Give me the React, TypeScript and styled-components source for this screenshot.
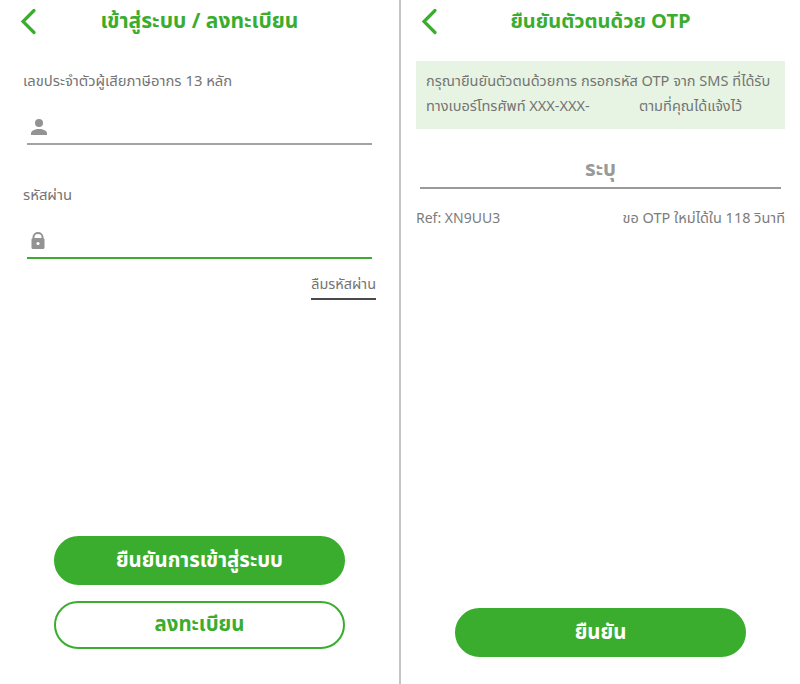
import styled, { createGlobalStyle } from 'styled-components';

const GREEN = '#3aad2e';

const GlobalStyle = createGlobalStyle`
  html, body {
    margin: 0;
    padding: 0;
    background: #fff;
    font-family: 'Noto Sans Thai', 'Noto Sans', 'DejaVu Sans', sans-serif;
  }
`;

/* Layout */
const Page = styled.div`
  display: flex;
  width: 800px;
  height: 684px;
  overflow: hidden;
`;
const Panel = styled.section`
  display: flex;
  flex-direction: column;
  flex: 1;
  min-width: 0;
`;
const Divider = styled.div`
  width: 2px;
  background: #c4c4c4;
`;

/* Header */
const Header = styled.header`
  display: grid;
  grid-template-columns: 60px 1fr 60px;
  align-items: center;
  height: 44px;
`;
const BackButton = styled.div`
  display: flex;
  padding-left: 19px;
`;
const Title = styled.h1<{ $size: number }>`
  margin: 0;
  color: ${GREEN};
  font-size: ${(props) => props.$size}px;
  font-weight: 700;
  line-height: 24px;
  text-align: center;
  white-space: nowrap;
`;

/* Login form */
const Form = styled.div`
  display: flex;
  flex-direction: column;
  padding: 26px 23px 0;
`;
const Label = styled.label`
  color: #747474;
  font-size: 14.8px;
  line-height: 24px;
`;
const Field = styled.div<{ $active?: boolean }>`
  display: flex;
  align-items: flex-end;
  height: 38px;
  margin: 13px 4px 0;
  padding: 0 0 8px 4px;
  box-sizing: border-box;
  border-bottom: 2px solid ${(props) => (props.$active ? GREEN : '#a3a3a3')};
  color: #939393;
`;
const SecondLabel = styled(Label)`
  margin-top: 39px;
`;
const ForgotLink = styled.a`
  align-self: flex-end;
  margin-top: 15px;
  padding-bottom: 2px;
  border-bottom: 2px solid #4a4a4a;
  color: #747474;
  font-size: 14.4px;
  line-height: 22px;
`;

/* Buttons */
const Actions = styled.div<{ $bottom: number }>`
  display: flex;
  flex-direction: column;
  gap: 16px;
  margin-top: auto;
  padding: 0 0 ${(props) => props.$bottom}px 54px;
`;
const Button = styled.button<{ $outline?: boolean }>`
  width: 291px;
  height: 48.5px;
  padding: 0;
  border: 2px solid ${GREEN};
  border-radius: 25px;
  background: ${(props) => (props.$outline ? '#fff' : GREEN)};
  color: ${(props) => (props.$outline ? GREEN : '#fff')};
  font-family: inherit;
  font-size: 20.4px;
  font-weight: 700;
`;

/* OTP */
const Notice = styled.div`
  margin: 17px 15px 0;
  padding: 9px 10px;
  background: #e7f4e3;
  color: #747474;
  font-size: 14.55px;
  line-height: 25px;
  white-space: pre;
`;
const OtpField = styled.div`
  margin: 24px 19px 0;
  border-bottom: 2px solid #9a9a9a;
  color: #999;
  font-size: 20.5px;
  font-weight: 700;
  line-height: 34px;
  text-align: center;
`;
const RefRow = styled.div`
  display: flex;
  justify-content: space-between;
  margin: 19px 15px 0;
  color: #7c7c7c;
  font-size: 14.5px;
  line-height: 22px;
`;
const RefCode = styled.span`
  font-size: 14px;
`;

const Chevron = () => (
  <svg width="20" height="28" viewBox="0 0 20 28" fill="none">
    <path d="M15 2.5 L4 13.5 L15 24.5" stroke={GREEN} strokeWidth="3.2" strokeLinecap="round" strokeLinejoin="miter" />
  </svg>
);

const UserIcon = () => (
  <svg width="16" height="16" viewBox="0 0 16 16" fill="currentColor">
    <circle cx="8" cy="4" r="4" />
    <path d="M0 16 V14.5 C0 11.5 4 10 8 10 C12 10 16 11.5 16 14.5 V16 Z" />
  </svg>
);

const LockIcon = () => (
  <svg width="14" height="17" viewBox="0 0 14 17">
    <path d="M2.5 6.5 V5 a4.5 4 0 0 1 9 0 V6.5" fill="none" stroke="currentColor" strokeWidth="2" />
    <rect x="0.5" y="6" width="13" height="11" rx="1.5" fill="currentColor" />
    <circle cx="7" cy="11.5" r="1.6" fill="#fff" />
  </svg>
);

export default function App() {
  return (
    <Page>
      <GlobalStyle />
      <Panel>
        <Header>
          <BackButton>
            <Chevron />
          </BackButton>
          <Title $size={21}>เข้าสู่ระบบ / ลงทะเบียน</Title>
        </Header>
        <Form>
          <Label>เลขประจำตัวผู้เสียภาษีอากร 13 หลัก</Label>
          <Field>
            <UserIcon />
          </Field>
          <SecondLabel>รหัสผ่าน</SecondLabel>
          <Field $active>
            <LockIcon />
          </Field>
          <ForgotLink>ลืมรหัสผ่าน</ForgotLink>
        </Form>
        <Actions $bottom={35}>
          <Button>ยืนยันการเข้าสู่ระบบ</Button>
          <Button $outline>ลงทะเบียน</Button>
        </Actions>
      </Panel>
      <Divider />
      <Panel>
        <Header>
          <BackButton>
            <Chevron />
          </BackButton>
          <Title $size={20}>ยืนยันตัวตนด้วย OTP</Title>
        </Header>
        <Notice>
          {'กรุณายืนยันตัวตนด้วยการ กรอกรหัส OTP จาก SMS ที่ได้รับ\nทางเบอร์โทรศัพท์ XXX-XXX-             ตามที่คุณได้แจ้งไว้'}
        </Notice>
        <OtpField>ระบุ</OtpField>
        <RefRow>
          <RefCode>Ref: XN9UU3</RefCode>
          <span>ขอ OTP ใหม่ได้ใน 118 วินาที</span>
        </RefRow>
        <Actions $bottom={27.5}>
          <Button>ยืนยัน</Button>
        </Actions>
      </Panel>
    </Page>
  );
}
